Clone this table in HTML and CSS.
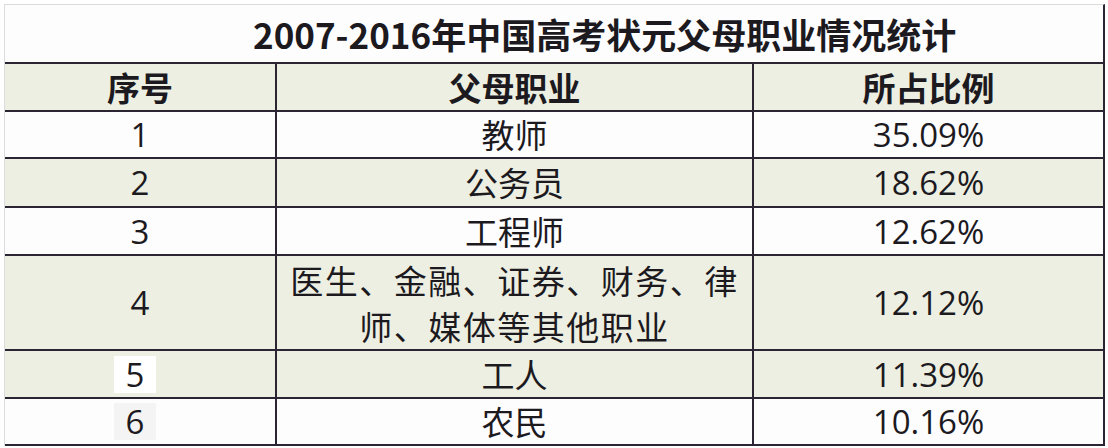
FILE: index.html
```html
<!DOCTYPE html>
<html lang="zh">
<head>
<meta charset="utf-8">
<link rel="stylesheet" href="styles.css">
</head>
<body>
<div class="sheet">
  <div class="title">2007-2016年中国高考状元父母职业情况统计</div>
  <div class="row head beige">
    <div class="cell c1">序号</div>
    <div class="cell c2">父母职业</div>
    <div class="cell c3">所占比例</div>
  </div>
  <div class="row r1">
    <div class="cell c1">1</div>
    <div class="cell c2">教师</div>
    <div class="cell c3">35.09%</div>
  </div>
  <div class="row r2 beige">
    <div class="cell c1">2</div>
    <div class="cell c2">公务员</div>
    <div class="cell c3">18.62%</div>
  </div>
  <div class="row r3">
    <div class="cell c1">3</div>
    <div class="cell c2">工程师</div>
    <div class="cell c3">12.62%</div>
  </div>
  <div class="row r4 beige">
    <div class="cell c1">4</div>
    <div class="cell c2 multi"><span class="line">医生、金融、证券、财务、律</span><span class="line">师、媒体等其他职业</span></div>
    <div class="cell c3">12.12%</div>
  </div>
  <div class="row r5 beige">
    <div class="cell c1"><span class="patch white">5</span></div>
    <div class="cell c2">工人</div>
    <div class="cell c3">11.39%</div>
  </div>
  <div class="row r6 last">
    <div class="cell c1"><span class="patch grey">6</span></div>
    <div class="cell c2">农民</div>
    <div class="cell c3">10.16%</div>
  </div>
</div>
</body>
</html>
```
FILE: styles.css
```css
html, body {
  margin: 0;
  padding: 0;
  background: #ffffff;
}
body {
  padding: 4px 0 0 4px;
  font-family: "Open Sans", "Noto Sans CJK SC", sans-serif;
  color: #1c1a1e;
}
.sheet {
  width: 1098px;
  border-top: 1px solid #dcdcdc;
  border-left: 1px solid #dcdcdc;
  border-right: 2px solid #2b2433;
  background: #fdfdfe;
}
.title {
  height: 57px;
  box-sizing: border-box;
  padding-left: 248px;
  padding-top: 1px;
  font-family: "Noto Sans CJK SC", sans-serif;
  font-weight: 700;
  font-size: 35px;
  line-height: 55px;
  white-space: nowrap;
}
.row {
  display: grid;
  grid-template-columns: 270px 477px 1fr;
  border-top: 2px solid #2b2433;
  box-sizing: border-box;
}
.row.last {
  border-bottom: 2px solid #2b2433;
}
.beige { background: #edefe2; }
.cell {
  display: flex;
  align-items: center;
  justify-content: center;
  font-size: 33px;
  line-height: 1;
}
.c2, .c3 { border-left: 2px solid #2b2433; }
.c2 { font-family: "Noto Sans CJK SC", sans-serif; }
.head .cell {
  font-family: "Noto Sans CJK SC", sans-serif;
  font-weight: 700;
}
.head { height: 48px; }
.r1 { height: 47px; }
.r2 { height: 49px; }
.r3 { height: 48px; }
.r4 { height: 95px; }
.r5 { height: 48px; }
.r6 { height: 49px; }
.multi {
  flex-direction: column;
  line-height: 46px;
}
.line {
  white-space: nowrap;
  letter-spacing: 1.5px;
}
.patch {
  display: inline-block;
  padding: 2px 12px;
  margin-right: 10px;
}
.patch.white { background: #ffffff; }
.patch.grey { background: #f4f4f4; }
```
